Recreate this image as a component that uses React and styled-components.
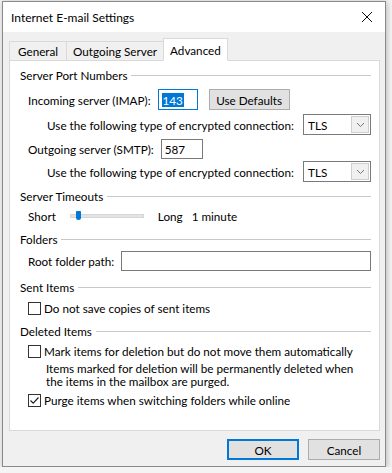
import styled, { createGlobalStyle } from "styled-components";

const GlobalStyle = createGlobalStyle`
  html, body {
    margin: 0;
    padding: 0;
    background: #f4f4f4;
  }
  body {
    font-family: Lato, "Noto Sans", sans-serif;
    font-size: 11.7px;
    color: #000;
  }
`;

const Window = styled.div`
  width: 384px;
  height: 466px;
  margin: 1px 0 0 2px;
  border: 1px solid #8a8a8a;
  background: #f0f0f0;
  box-shadow: 1px 1px 6px rgba(0, 0, 0, 0.25);
  display: flex;
  flex-direction: column;
  box-sizing: border-box;
`;

const TitleBar = styled.div`
  height: 30px;
  background: #fff;
  display: flex;
  align-items: center;
  justify-content: space-between;
  padding: 0 12px 0 8px;
  font-size: 12px;
`;

const CloseIcon = styled.svg`
  width: 12px;
  height: 12px;
`;

const Body = styled.div`
  padding: 6px 5px 0 6px;
  display: flex;
  flex-direction: column;
`;

const TabStrip = styled.div`
  display: flex;
  align-items: flex-end;
  height: 23px;
  margin-bottom: -1px;
  position: relative;
  z-index: 1;
`;

const Tab = styled.div`
  height: ${(p) => (p.$active ? "23px" : "20px")};
  box-sizing: border-box;
  padding: 0 ${(p) => p.$pad}px;
  margin: 0 ${(p) => (p.$active ? "-1px" : "0")};
  display: flex;
  align-items: center;
  border: 1px solid #d9d9d9;
  border-bottom: ${(p) => (p.$active ? "1px solid #fff" : "1px solid #d9d9d9")};
  border-left: ${(p) => (p.$first || p.$active ? "1px solid #d9d9d9" : "none")};
  background: ${(p) => (p.$active ? "#fff" : "#f0f0f0")};
`;

const Panel = styled.div`
  height: 371px;
  box-sizing: border-box;
  background: #fff;
  border: 1px solid #d9d9d9;
  padding: 0 8px 0 10px;
  display: flex;
  flex-direction: column;
`;

const GroupHeader = styled.div`
  display: flex;
  align-items: center;
  height: 16px;
  margin-top: ${(p) => p.$top}px;
  gap: 4px;
  &::after {
    content: "";
    flex: 1;
    border-top: 1px solid #c8c8c8;
  }
`;

const Row = styled.div`
  display: flex;
  align-items: center;
  gap: ${(p) => p.$gap ?? 7}px;
  height: ${(p) => p.$h ?? 16}px;
  margin-top: ${(p) => p.$top}px;
  padding-left: ${(p) => p.$indent ?? 8}px;
  white-space: nowrap;
`;

const TextBox = styled.div`
  width: ${(p) => (p.$w ? `${p.$w}px` : "auto")};
  flex: ${(p) => (p.$w ? "none" : "1")};
  height: ${(p) => p.$h ?? 20}px;
  box-sizing: border-box;
  border: 1px solid ${(p) => (p.$focus ? "#0078d7" : "#7a7a7a")};
  background: #fff;
  display: flex;
  align-items: center;
  padding-left: 3px;
`;

const Selected = styled.span`
  background: #0078d7;
  color: #fff;
  padding: 0 1px;
`;

const Button = styled.button`
  font: inherit;
  color: #000;
  width: ${(p) => p.$w}px;
  height: ${(p) => p.$h ?? 21}px;
  box-sizing: border-box;
  background: #e1e1e1;
  border: ${(p) => (p.$default ? "2px solid #0078d7" : "1px solid #adadad")};
  margin-left: ${(p) => p.$ml ?? 0}px;
  padding: 0;
`;

const Select = styled.div`
  margin-left: auto;
  width: 68px;
  height: 21px;
  box-sizing: border-box;
  border: 1px solid #7a7a7a;
  background: #fff;
  display: flex;
  align-items: stretch;
`;

const SelectText = styled.span`
  flex: 1;
  display: flex;
  align-items: center;
  padding-left: 4px;
`;

const Arrow = styled.span`
  width: 16px;
  margin: 1px;
  background: #f0f0f0;
  border: 1px solid #cfcfcf;
  display: flex;
  align-items: center;
  justify-content: center;
`;

const Track = styled.div`
  width: 74px;
  height: 4px;
  margin: 0 14px 0 14px;
  background: #e4e4e4;
  border: 1px solid #d6d6d6;
  box-sizing: border-box;
  position: relative;
`;

const Thumb = styled.div`
  position: absolute;
  left: 5px;
  top: -4px;
  width: 5px;
  height: 9px;
  border-radius: 1px 1px 3px 3px;
  background: #0078d7;
`;

const Check = styled.span`
  width: 13px;
  height: 13px;
  box-sizing: border-box;
  border: 1px solid #333;
  background: #fff;
  display: flex;
  align-items: center;
  justify-content: center;
`;

const Note = styled.div`
  margin-top: 3px;
  padding-left: 26px;
  display: flex;
  flex-direction: column;
`;

const NoteLine = styled.div`
  height: 13px;
  line-height: 13px;
  white-space: nowrap;
`;

const Footer = styled.div`
  display: flex;
  justify-content: flex-end;
  gap: 9px;
  padding-top: 8px;
`;

const Chevron = () => (
  <svg width="9" height="6" viewBox="0 0 9 6">
    <path d="M1 1 L4.5 4.5 L8 1" fill="none" stroke="#777" strokeWidth="1" />
  </svg>
);

const CheckBox = ({ checked }) => (
  <Check>
    {checked && (
      <svg width="11" height="11" viewBox="0 0 11 11">
        <path d="M1.5 5.5 L4.2 8.2 L9.5 2.5" fill="none" stroke="#222" strokeWidth="1.2" />
      </svg>
    )}
  </Check>
);

export default function App() {
  return (
    <>
      <GlobalStyle />
      <Window>
        <TitleBar>
          <span>Internet E-mail Settings</span>
          <CloseIcon viewBox="0 0 12 12">
            <path d="M1 1 L11 11 M11 1 L1 11" stroke="#111" strokeWidth="1" />
          </CloseIcon>
        </TitleBar>
        <Body>
          <TabStrip>
            <Tab $first $pad={8}>General</Tab>
            <Tab $pad={6}>Outgoing Server</Tab>
            <Tab $active $pad={6}>Advanced</Tab>
          </TabStrip>
          <Panel>
            <GroupHeader $top={6}>Server Port Numbers</GroupHeader>
            <Row $h={21} $top={6}>
              Incoming server (IMAP):
              <TextBox $w={40} $h={21} $focus>
                <Selected>143</Selected>
              </TextBox>
              <Button $w={81} $ml={4}>Use Defaults</Button>
            </Row>
            <Row $h={21} $top={4} $indent={27}>
              Use the following type of encrypted connection:
              <Select>
                <SelectText>TLS</SelectText>
                <Arrow><Chevron /></Arrow>
              </Select>
            </Row>
            <Row $h={21} $top={3}>
              Outgoing server (SMTP):
              <TextBox $w={42}>587</TextBox>
            </Row>
            <Row $h={21} $top={2} $indent={27}>
              Use the following type of encrypted connection:
              <Select>
                <SelectText>TLS</SelectText>
                <Arrow><Chevron /></Arrow>
              </Select>
            </Row>
            <GroupHeader $top={6}>Server Timeouts</GroupHeader>
            <Row $top={4} $gap={0}>
              Short
              <Track><Thumb /></Track>
              <span>Long</span>
              <span style={{ marginLeft: 9 }}>1 minute</span>
            </Row>
            <GroupHeader $top={7}>Folders</GroupHeader>
            <Row $h={20} $top={4}>
              Root folder path:
              <TextBox />
            </Row>
            <GroupHeader $top={8}>Sent Items</GroupHeader>
            <Row $top={5} $gap={3}>
              <CheckBox />
              Do not save copies of sent items
            </Row>
            <GroupHeader $top={7}>Deleted Items</GroupHeader>
            <Row $top={4} $gap={3}>
              <CheckBox />
              Mark items for deletion but do not move them automatically
            </Row>
            <Note>
              <NoteLine>Items marked for deletion will be permanently deleted when</NoteLine>
              <NoteLine>the items in the mailbox are purged.</NoteLine>
            </Note>
            <Row $top={4} $gap={3}>
              <CheckBox checked />
              Purge items when switching folders while online
            </Row>
          </Panel>
          <Footer>
            <Button $w={72} $default>OK</Button>
            <Button $w={72}>Cancel</Button>
          </Footer>
        </Body>
      </Window>
    </>
  );
}
